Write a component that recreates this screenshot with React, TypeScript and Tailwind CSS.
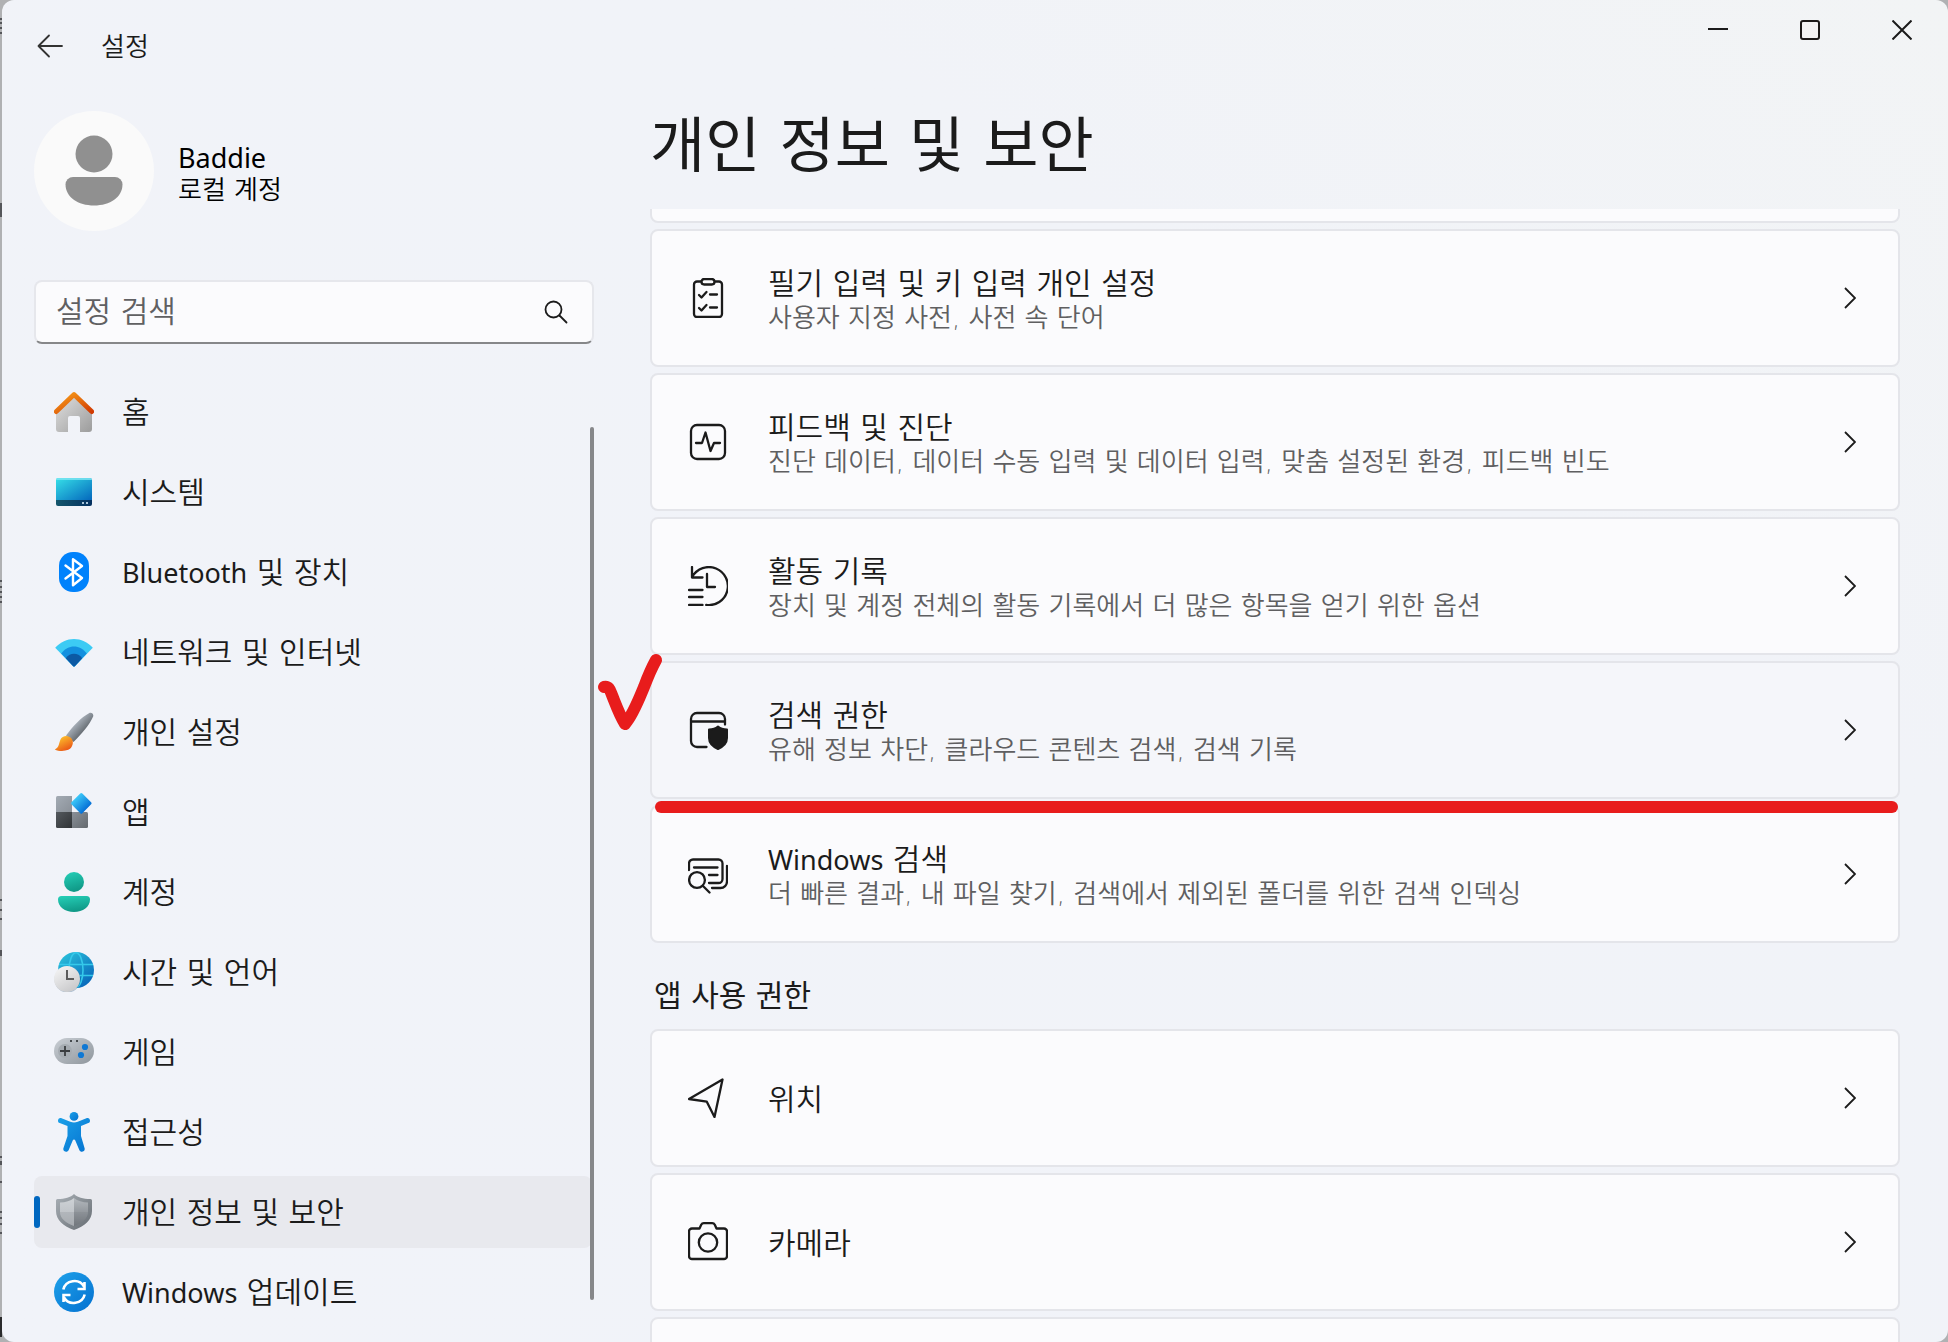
import { useState } from 'react';
import type { ReactNode } from 'react';

interface NavItem {
  id: string;
  latin?: string;
  label: string;
  icon: ReactNode;
}

interface SettingItem {
  id: string;
  latin?: string;
  title: string;
  description?: string;
  icon: ReactNode;
}

// ---------- Sidebar icons ----------

const HomeIcon = () => (
  <svg viewBox="0 0 40 40" className="size-10 shrink-0" aria-hidden="true">
    <defs>
      <linearGradient id="homeBody" x1="0" y1="0" x2="1" y2="1">
        <stop offset="0" stopColor="#e0e0e0" />
        <stop offset="1" stopColor="#9c9c9c" />
      </linearGradient>
      <linearGradient id="homeRoof" x1="0" y1="0" x2="1" y2="1">
        <stop offset="0" stopColor="#f9a01b" />
        <stop offset="1" stopColor="#d13a02" />
      </linearGradient>
    </defs>
    <path d="M2 20 20 4l18 16v17a3 3 0 0 1-3 3h-9V26a2 2 0 0 0-2-2h-8a2 2 0 0 0-2 2v14H5a3 3 0 0 1-3-3Z" fill="url(#homeBody)" />
    <path d="M2.3 19.6 20 2.600l17.700 17" fill="none" stroke="url(#homeRoof)" strokeWidth="4.800" strokeLinecap="round" strokeLinejoin="round" />
  </svg>
);

const SystemIcon = () => (
  <svg viewBox="0 0 40 40" className="size-10 shrink-0" aria-hidden="true">
    <defs>
      <linearGradient id="sysScreen" x1="0" y1="0" x2="1" y2="1">
        <stop offset="0" stopColor="#36e0e8" />
        <stop offset="1" stopColor="#0468bd" />
      </linearGradient>
      <linearGradient id="sysBar" x1="0" y1="0" x2="1" y2="0">
        <stop offset="0" stopColor="#14566c" />
        <stop offset="1" stopColor="#053160" />
      </linearGradient>
    </defs>
    <path d="M4 6h32a2 2 0 0 1 2 2v20H2V8a2 2 0 0 1 2-2Z" fill="url(#sysScreen)" />
    <path d="M4 6h32a2 2 0 0 1 2 2H2a2 2 0 0 1 2-2Z" fill="#7ee6f2" opacity=".8" />
    <path d="M2 28h36v4a2 2 0 0 1-2 2H4a2 2 0 0 1-2-2Z" fill="url(#sysBar)" />
    <path d="M28 30h2v2h-2zM32 30h2v2h-2z" fill="#a9c4d9" />
  </svg>
);

const BluetoothIcon = () => (
  <svg viewBox="0 0 40 40" className="size-10 shrink-0" aria-hidden="true">
    <rect x="5" y="0" width="30" height="40" rx="14" fill="#0082fc" />
    <path d="m11.500 13.500 16.500 12.500-9 7.300V7.200l9 6.800-16.500 12.500" fill="none" stroke="#fff" strokeWidth="2.400" strokeLinecap="round" strokeLinejoin="round" />
  </svg>
);

const NetworkIcon = () => (
  <svg viewBox="0 0 40 40" className="size-10 shrink-0" aria-hidden="true">
    <path d="M1.200 15.800C11.500 4.200 28.500 4.200 38.800 15.800L20.800 34.200a1.200 1.200 0 0 1-1.600 0Z" fill="#3ccbf4" />
    <path d="M7.200 21.600C14 12 26 12 32.800 21.600L20.800 34.200a1.200 1.200 0 0 1-1.600 0Z" fill="#1390df" />
    <path d="M11.800 26.200C16 20.300 24 20.300 28.200 26.200L20.800 34.200a1.200 1.200 0 0 1-1.600 0Z" fill="#0c59a4" />
  </svg>
);

const BrushIcon = () => (
  <svg viewBox="0 0 40 40" className="size-10 shrink-0" aria-hidden="true">
    <defs>
      <linearGradient id="brushHandle" x1=".3" y1=".3" x2=".7" y2=".7">
        <stop offset="0" stopColor="#b4bcc6" />
        <stop offset="1" stopColor="#5a6066" />
      </linearGradient>
      <linearGradient id="brushTip" x1=".2" y1="0" x2=".8" y2="1">
        <stop offset="0" stopColor="#ffcb2e" />
        <stop offset="1" stopColor="#e84d15" />
      </linearGradient>
    </defs>
    <path d="M35 1.200c2.600-1.400 5.200 1 4 3.600C36 12 27.500 22.500 19.500 30L12 23.500C18.500 14.500 27.500 5 35 1.200Z" fill="url(#brushHandle)" />
    <path d="M7 26.500c2.500-3.600 8-3.300 10.700.2 2.600 3.800.6 9.300-3.400 11.100C10 39.500 4.500 39.300.8 37.400 5.500 35.800 4.800 30 7 26.500Z" fill="url(#brushTip)" />
  </svg>
);

const AppsIcon = () => (
  <svg viewBox="0 0 40 40" className="size-10 shrink-0" aria-hidden="true">
    <defs>
      <linearGradient id="appsDark" x1="0" y1="0" x2="1" y2="1">
        <stop offset="0" stopColor="#54595e" />
        <stop offset="1" stopColor="#303336" />
      </linearGradient>
      <linearGradient id="appsLight" x1="0" y1="0" x2="1" y2="1">
        <stop offset="0" stopColor="#a3abb4" />
        <stop offset="1" stopColor="#8a9098" />
      </linearGradient>
      <linearGradient id="appsMid" x1="0" y1="0" x2="1" y2="1">
        <stop offset="0" stopColor="#8a9098" />
        <stop offset="1" stopColor="#64696e" />
      </linearGradient>
      <linearGradient id="appsBlue" x1="0" y1=".5" x2="1" y2=".5">
        <stop offset="0" stopColor="#3cc8f8" />
        <stop offset="1" stopColor="#0670d6" />
      </linearGradient>
    </defs>
    <path d="M3.500 4H18v16H2V5.500A1.500 1.500 0 0 1 3.500 4Z" fill="url(#appsLight)" />
    <path d="M2 20h16v16H3.500A1.500 1.500 0 0 1 2 34.500Z" fill="url(#appsDark)" />
    <path d="M18 20h14.500a1.500 1.500 0 0 1 1.500 1.500v13a1.500 1.500 0 0 1-1.500 1.500H18Z" fill="url(#appsMid)" />
    <rect x="19.600" y="3.600" width="15.400" height="15.400" rx="1.500" transform="rotate(45 27.300 11.300)" fill="url(#appsBlue)" />
  </svg>
);

const AccountsIcon = () => (
  <svg viewBox="0 0 40 40" className="size-10 shrink-0" aria-hidden="true">
    <defs>
      <linearGradient id="accFill" x1="0" y1="0" x2=".3" y2="1">
        <stop offset="0" stopColor="#26d0b8" />
        <stop offset="1" stopColor="#109a88" />
      </linearGradient>
    </defs>
    <circle cx="20" cy="10" r="10" fill="url(#accFill)" />
    <path d="M7.500 24h25a3.500 3.500 0 0 1 3.500 3.500C36 35 29 40 20 40S4 35 4 27.500A3.500 3.500 0 0 1 7.500 24Z" fill="url(#accFill)" />
  </svg>
);

const TimeIcon = () => (
  <svg viewBox="0 0 40 40" className="size-10 shrink-0" aria-hidden="true">
    <defs>
      <linearGradient id="globe" x1=".1" y1="0" x2=".9" y2="1">
        <stop offset="0" stopColor="#2bc4dc" />
        <stop offset="1" stopColor="#0560b8" />
      </linearGradient>
      <linearGradient id="clock" x1=".2" y1="0" x2=".8" y2="1">
        <stop offset="0" stopColor="#f4f4f4" />
        <stop offset="1" stopColor="#c6c6c8" />
      </linearGradient>
    </defs>
    <circle cx="22" cy="18" r="18" fill="url(#globe)" />
    <path d="M5 12.500h34M5 23.500h34" stroke="#35c9ea" strokeWidth="1.600" />
    <ellipse cx="22" cy="18" rx="7" ry="17.200" fill="none" stroke="#35c9ea" strokeWidth="1.600" />
    <circle cx="13.500" cy="27.500" r="13" fill="#0a4a7a" opacity=".3" />
    <circle cx="13" cy="27" r="13" fill="url(#clock)" />
    <path d="M13 18v9h7" fill="none" stroke="#5c5c5c" strokeWidth="2" />
  </svg>
);

const GamingIcon = () => (
  <svg viewBox="0 0 40 40" className="size-10 shrink-0" aria-hidden="true">
    <defs>
      <linearGradient id="pad" x1="0" y1="0" x2="1" y2="1">
        <stop offset="0" stopColor="#c9ced4" />
        <stop offset="1" stopColor="#8e959c" />
      </linearGradient>
    </defs>
    <rect x="0" y="6" width="40" height="26" rx="13" fill="url(#pad)" />
    <circle cx="11" cy="19" r="7" fill="#a5abb1" />
    <path d="M11 14v10M6 19h10" stroke="#3a3d40" strokeWidth="1.800" />
    <circle cx="31" cy="15" r="3.100" fill="#0f78d4" />
    <circle cx="27" cy="23" r="3.100" fill="#0f78d4" />
    <path d="M16 8h2v2h-2zM22 8h2v2h-2z" fill="#45494d" />
  </svg>
);

const AccessibilityIcon = () => (
  <svg viewBox="0 0 40 40" className="size-10 shrink-0" aria-hidden="true">
    <defs>
      <linearGradient id="person" x1="0" y1="0" x2="1" y2="1">
        <stop offset="0" stopColor="#1ba0e8" />
        <stop offset="1" stopColor="#0472d0" />
      </linearGradient>
    </defs>
    <circle cx="20" cy="4.400" r="4.400" fill="url(#person)" />
    <path d="M7.600 6.300 16.300 9.700c2.400.9 5 .9 7.400 0l8.700-3.400c3.400-1.300 5.100 3.500 1.900 4.800l-7.300 3V24l3.600 12.200c1 3.600-4.100 5-5.300 1.800L21.300 28.400c-.5-1.200-2.100-1.200-2.600 0L14.700 38c-1.200 3.200-6.300 1.800-5.300-1.800L13.500 24v-9.900l-7.800-3c-3.200-1.300-1.500-6.100 1.900-4.800Z" fill="url(#person)" />
  </svg>
);

const ShieldIcon = () => (
  <svg viewBox="0 0 40 40" className="size-10 shrink-0" aria-hidden="true">
    <defs>
      <linearGradient id="shieldOuter" x1="0" y1="0" x2="1" y2="1">
        <stop offset="0" stopColor="#a9b0b6" />
        <stop offset="1" stopColor="#666c72" />
      </linearGradient>
      <linearGradient id="shieldLeft" x1="0" y1="0" x2="0" y2="1">
        <stop offset="0" stopColor="#ced2d6" />
        <stop offset="1" stopColor="#b4b8bd" />
      </linearGradient>
      <linearGradient id="shieldRight" x1="0" y1="0" x2="0" y2="1">
        <stop offset="0" stopColor="#b4b9be" />
        <stop offset="1" stopColor="#73787e" />
      </linearGradient>
    </defs>
    <path d="M20 2c3.400 3.400 9 5 16.500 5A1.500 1.500 0 0 1 38 8.500V19c0 9-7.500 15.500-18 19C9.500 34.500 2 28 2 19V8.500A1.500 1.500 0 0 1 3.500 7C11 7 16.600 5.400 20 2Z" fill="url(#shieldOuter)" />
    <path d="M20 6v28C12 31 6 26.500 6 20v-9.500C11.500 10.300 16.500 9 20 6Z" fill="url(#shieldLeft)" />
    <path d="M20 6v28c8-3 14-7.500 14-14v-9.500C28.500 10.300 23.500 9 20 6Z" fill="url(#shieldRight)" />
    <path d="M6 20h28c0 6.500-6 11-14 14C12 31 6 26.500 6 20Z" fill="#6d7278" opacity=".18" />
  </svg>
);

const UpdateIcon = () => (
  <svg viewBox="0 0 40 40" className="size-10 shrink-0" aria-hidden="true">
    <defs>
      <linearGradient id="update" x1="0" y1="0" x2="1" y2="1">
        <stop offset="0" stopColor="#1fa2ea" />
        <stop offset="1" stopColor="#0370d0" />
      </linearGradient>
    </defs>
    <circle cx="20" cy="20" r="20" fill="url(#update)" />
    <path d="M9.300 17.500C11.500 8 25 5.800 30 14.500M30.500 10v7h-7M30.700 22.500C28.500 32 15 34.200 10 25.500M9.500 30v-7h7" fill="none" stroke="#fff" strokeWidth="2.600" />
  </svg>
);

// ---------- Card icons ----------

const LineIcon = ({ children }: { children: ReactNode }) => (
  <svg
    viewBox="0 0 40 40"
    className="size-10 shrink-0"
    fill="none"
    stroke="currentColor"
    strokeWidth="2.300"
    strokeLinecap="round"
    strokeLinejoin="round"
    aria-hidden="true"
  >
    {children}
  </svg>
);

const InkingIcon = () => (
  <LineIcon>
    <path d="M13 3.500H9a3 3 0 0 0-3 3V36a3 3 0 0 0 3 3h22a3 3 0 0 0 3-3V6.500a3 3 0 0 0-3-3h-4" />
    <rect x="13.500" y="1" width="13" height="5.500" rx="2.700" />
    <path d="m11 17 2.500 2.500 5-5.500M22 16.500h7M11 30l2.500 2.500 5-5.500M22 29.500h7" />
  </LineIcon>
);

const FeedbackIcon = () => (
  <LineIcon>
    <rect x="3" y="3" width="34" height="34" rx="6" />
    <path d="M8 21h6l3.500-10.500L22.500 29l3.500-8h6" />
  </LineIcon>
);

const HistoryIcon = () => (
  <LineIcon>
    <path d="M4 1v10.500h10.500M4.300 10.800A19 19 0 1 1 18.200 38.900M19 8v13h8M1 24h13.500M1 31h13.500M1 38.900h13.500" />
  </LineIcon>
);

const SearchPermissionIcon = () => (
  <LineIcon>
    <path d="M37 14.500V9a6 6 0 0 0-6-6H9a6 6 0 0 0-6 6v22a6 6 0 0 0 6 6h9.500M3 11.500h34" />
    <path d="M30 16.500c2.300 2 5 3 9 3V28c0 5-3.500 8.500-9 11-5.500-2.500-9-6-9-11v-8.500c4 0 6.700-1 9-3Z" fill="currentColor" strokeWidth="2" />
  </LineIcon>
);

const SearchWindowsIcon = () => (
  <LineIcon>
    <path d="M1 16v-6.500a4 4 0 0 1 4-4h25.500a4 4 0 0 1 4 4V25a4 4 0 0 1-4 4H21" />
    <path d="M39 12v15.500a6.500 6.500 0 0 1-6.500 6.500H24M6 13.500h23.500M21 21h8.500" />
    <circle cx="9" cy="26" r="7.900" />
    <path d="m15 32 6.500 6.500" />
  </LineIcon>
);

const LocationIcon = () => (
  <LineIcon>
    <path d="M34.500 1.500 1 21l17.800 2.700L26.500 39Z" />
  </LineIcon>
);

const CameraIcon = () => (
  <LineIcon>
    <path d="m11.500 6.500 1.700-3.700A3 3 0 0 1 16 1.200h8a3 3 0 0 1 2.800 1.600l1.700 3.700H36a3 3 0 0 1 3 3V34a3 3 0 0 1-3 3H4a3 3 0 0 1-3-3V9.500a3 3 0 0 1 3-3Z" />
    <circle cx="20" cy="20.500" r="9.200" />
  </LineIcon>
);

const ChevronIcon = () => (
  <svg viewBox="0 0 12 22" className="h-[22px] w-3 shrink-0" fill="none" stroke="currentColor" strokeWidth="1.800" aria-hidden="true">
    <path d="m1 1 10 10L1 21" />
  </svg>
);

const NAV_ITEMS: NavItem[] = [
  { id: 'home', label: '홈', icon: <HomeIcon /> },
  { id: 'system', label: '시스템', icon: <SystemIcon /> },
  { id: 'bluetooth', latin: 'Bluetooth', label: ' 및 장치', icon: <BluetoothIcon /> },
  { id: 'network', label: '네트워크 및 인터넷', icon: <NetworkIcon /> },
  { id: 'personalization', label: '개인 설정', icon: <BrushIcon /> },
  { id: 'apps', label: '앱', icon: <AppsIcon /> },
  { id: 'accounts', label: '계정', icon: <AccountsIcon /> },
  { id: 'time', label: '시간 및 언어', icon: <TimeIcon /> },
  { id: 'gaming', label: '게임', icon: <GamingIcon /> },
  { id: 'accessibility', label: '접근성', icon: <AccessibilityIcon /> },
  { id: 'privacy', label: '개인 정보 및 보안', icon: <ShieldIcon /> },
  { id: 'update', latin: 'Windows', label: ' 업데이트', icon: <UpdateIcon /> },
];

const PRIVACY_ITEMS: SettingItem[] = [
  { id: 'inking', title: '필기 입력 및 키 입력 개인 설정', description: '사용자 지정 사전, 사전 속 단어', icon: <InkingIcon /> },
  { id: 'feedback', title: '피드백 및 진단', description: '진단 데이터, 데이터 수동 입력 및 데이터 입력, 맞춤 설정된 환경, 피드백 빈도', icon: <FeedbackIcon /> },
  { id: 'activity', title: '활동 기록', description: '장치 및 계정 전체의 활동 기록에서 더 많은 항목을 얻기 위한 옵션', icon: <HistoryIcon /> },
  { id: 'search-permission', title: '검색 권한', description: '유해 정보 차단, 클라우드 콘텐츠 검색, 검색 기록', icon: <SearchPermissionIcon /> },
  { id: 'search-windows', latin: 'Windows', title: ' 검색', description: '더 빠른 결과, 내 파일 찾기, 검색에서 제외된 폴더를 위한 검색 인덱싱', icon: <SearchWindowsIcon /> },
];

const PERMISSION_ITEMS: SettingItem[] = [
  { id: 'location', title: '위치', icon: <LocationIcon /> },
  { id: 'camera', title: '카메라', icon: <CameraIcon /> },
];

const Latin = ({ children }: { children: ReactNode }) => (
  <span className="font-['Noto_Sans'] text-[27px] font-normal">{children}</span>
);

// Red pen marks drawn over the highlighted card
const Highlight = () => (
  <>
    <svg viewBox="0 0 70 84" className="pointer-events-none absolute -top-[12px] -left-[57px] h-[84px] w-[70px]" aria-hidden="true">
      <path d="M9 36c5-1 6 3 8 8 4 10 7 19 13 29 8-9 14-25 19-37 3-8 7-18 12-27" fill="none" stroke="#e81c1c" strokeWidth="12" strokeLinecap="round" strokeLinejoin="round" />
    </svg>
    <span className="pointer-events-none absolute top-[138px] right-0 left-[3px] z-10 h-3 rounded-full bg-[#e81c1c]" />
  </>
);

// Sliver of the window behind, visible along the left edge
const BackdropEdge = () => (
  <svg className="fixed top-0 left-0 h-full w-[2px]" fill="#55565a" aria-hidden="true">
    <path d="M0 18h2v2H0zM0 22h2v2H0zM0 27h2v2H0zM0 32h2v2H0zM0 203h2v14H0zM0 580h2v2H0zM0 586h2v2H0zM0 591h2v2H0zM0 596h2v2H0zM0 601h2v2H0zM0 899h2v2H0zM0 909h2v2H0zM0 918h2v2H0zM0 950h2v6H0zM0 1156h2v2H0zM0 1161h2v4H0zM0 1181h2v2H0zM0 1211h2v2H0zM0 1217h2v2H0zM0 1223h2v2H0zM0 1232h2v2H0z" />
    <path d="M0 1317h2v20H0z" fill="#2b2b2d" />
  </svg>
);

function SettingCard({ item, marked = false }: { item: SettingItem; marked?: boolean }) {
  return (
    <button
      type="button"
      className={`relative flex h-[138px] w-full shrink-0 items-center rounded-lg border-2 border-[#e4e5ea] pr-[42px] pl-9 text-left ${
        marked ? 'bg-[#f5f6fa]' : 'bg-[#fbfbfd]'
      }`}
    >
      {item.icon}
      <span className="ml-10 flex min-w-0 flex-1 flex-col pt-1">
        <span className="truncate text-[30px] leading-9">
          {item.latin && <Latin>{item.latin}</Latin>}
          {item.title}
        </span>
        {item.description && (
          <span className="truncate text-[26px] leading-8 text-[#5f5f61]">{item.description}</span>
        )}
      </span>
      <ChevronIcon />
      {marked && <Highlight />}
    </button>
  );
}

export default function App() {
  const [activeNav, setActiveNav] = useState('privacy');
  const [search, setSearch] = useState('');

  return (
    <div className="h-screen bg-[#b0b1b3] pl-[2px] font-['DejaVu_Sans','Noto_Sans_CJK_KR',sans-serif] font-[350] text-[#1b1b1b]">
      <BackdropEdge />
      <div className="flex h-full overflow-hidden rounded-xl bg-linear-to-bl from-[#f2f4f5] via-[#f1f3f8] via-30% to-[#f1f3f9]">
        {/* Sidebar */}
        <aside className="flex w-[592px] shrink-0 flex-col pl-8">
          <div className="flex h-[92px] shrink-0 items-center">
            <button type="button" className="ml-[3px] flex h-10 w-8 items-center" aria-label="뒤로">
              <svg viewBox="0 0 26 24" className="h-6 w-[26px]" fill="none" stroke="#333" strokeWidth="1.800" strokeLinecap="round" strokeLinejoin="round" aria-hidden="true">
                <path d="M25 12H1.500M12 1.500 1.500 12 12 22.500" />
              </svg>
            </button>
            <span className="ml-8 pt-[2px] text-[26px] leading-8">설정</span>
          </div>

          <div className="mt-[19px] flex shrink-0 items-center gap-6">
            <svg viewBox="0 0 120 120" className="size-[120px]" aria-hidden="true">
              <circle cx="60" cy="60" r="60" fill="#fafafa" />
              <circle cx="60" cy="43" r="18.500" fill="#909090" />
              <path d="M39 66h42a7.500 7.500 0 0 1 7.500 7.500C88.500 86 76 94.500 60 94.500S31.500 86 31.500 73.500A7.500 7.500 0 0 1 39 66Z" fill="#909090" />
            </svg>
            <div className="flex flex-col pt-[6px] text-black">
              <span className="font-['Noto_Sans'] text-[27px] leading-8 font-normal">Baddie</span>
              <span className="text-[26px] leading-8">로컬 계정</span>
            </div>
          </div>

          <div className="mt-[49px] flex h-16 shrink-0 items-center rounded-lg border-2 border-[#e6e7ec] border-b-[#868789] bg-[#fbfbfd] pr-6 pl-5">
            <input
              type="search"
              value={search}
              onChange={(e) => setSearch(e.target.value)}
              placeholder="설정 검색"
              aria-label="설정 검색"
              className="h-[56px] min-w-0 flex-1 appearance-none bg-transparent text-[30px] leading-[56px] outline-none placeholder:text-[#606062]"
            />
            <svg viewBox="0 0 24 24" className="size-6" fill="none" stroke="currentColor" strokeWidth="1.800" strokeLinecap="round" aria-hidden="true">
              <circle cx="9.500" cy="9.500" r="8" />
              <path d="m15.500 15.500 7 7" />
            </svg>
          </div>

          <div className="relative mt-8 min-h-0 flex-1">
            <nav className="flex flex-col gap-2 pr-[2px]">
              {NAV_ITEMS.map((item) => {
                const isActive = item.id === activeNav;
                return (
                  <button
                    key={item.id}
                    type="button"
                    onClick={() => setActiveNav(item.id)}
                    aria-current={isActive ? 'page' : undefined}
                    className={`relative flex h-[72px] items-center gap-7 rounded-lg pl-5 text-left text-[30px] leading-10 ${
                      isActive ? 'bg-[#e8e9ee]' : ''
                    }`}
                  >
                    {isActive && <span className="absolute left-0 h-8 w-[6px] rounded-full bg-[#0067c0]" />}
                    {item.icon}
                    <span className="truncate pt-[2px]">
                      {item.latin && <Latin>{item.latin}</Latin>}
                      {item.label}
                    </span>
                  </button>
                );
              })}
            </nav>
            <div className="absolute top-[51px] right-0 bottom-[42px] w-1 rounded-full bg-[#86878a]" />
          </div>
        </aside>

        {/* Content */}
        <main className="flex min-w-0 flex-1 flex-col">
          <div className="flex h-[60px] shrink-0 justify-end">
            <button type="button" className="flex w-[92px] items-center justify-center" aria-label="최소화">
              <svg viewBox="0 0 20 20" className="size-5" aria-hidden="true">
                <path d="M0 9h20" stroke="#1b1b1b" strokeWidth="2" />
              </svg>
            </button>
            <button type="button" className="flex w-[92px] items-center justify-center" aria-label="최대화">
              <svg viewBox="0 0 20 20" className="size-5" aria-hidden="true">
                <rect x="1" y="1" width="18" height="18" rx="2" fill="none" stroke="#1b1b1b" strokeWidth="2" />
              </svg>
            </button>
            <button type="button" className="flex w-[92px] items-center justify-center" aria-label="닫기">
              <svg viewBox="0 0 20 20" className="size-5" aria-hidden="true">
                <path d="m.5.5 19 19m0-19-19 19" stroke="#1b1b1b" strokeWidth="2" />
              </svg>
            </button>
          </div>

          <h1 className="mb-[23px] ml-14 shrink-0 pt-[46px] text-[60px] leading-[80px] font-normal">개인 정보 및 보안</h1>

          <div className="flex min-h-0 flex-1 flex-col gap-[6px] overflow-hidden pr-12 pl-14">
            {/* Card scrolled almost out of view */}
            <div className="-mt-[124px] h-[138px] shrink-0 rounded-lg border-2 border-[#e4e5ea] bg-[#fbfbfd]" />
            {PRIVACY_ITEMS.map((item) => (
              <SettingCard key={item.id} item={item} marked={item.id === 'search-permission'} />
            ))}
            <h2 className="mt-[26px] mb-[6px] shrink-0 pl-1 text-[30px] leading-[42px] font-normal">앱 사용 권한</h2>
            {PERMISSION_ITEMS.map((item) => (
              <SettingCard key={item.id} item={item} />
            ))}
            <div className="h-[138px] shrink-0 rounded-lg border-2 border-[#e4e5ea] bg-[#fbfbfd]" />
          </div>
        </main>
      </div>
    </div>
  );
}
